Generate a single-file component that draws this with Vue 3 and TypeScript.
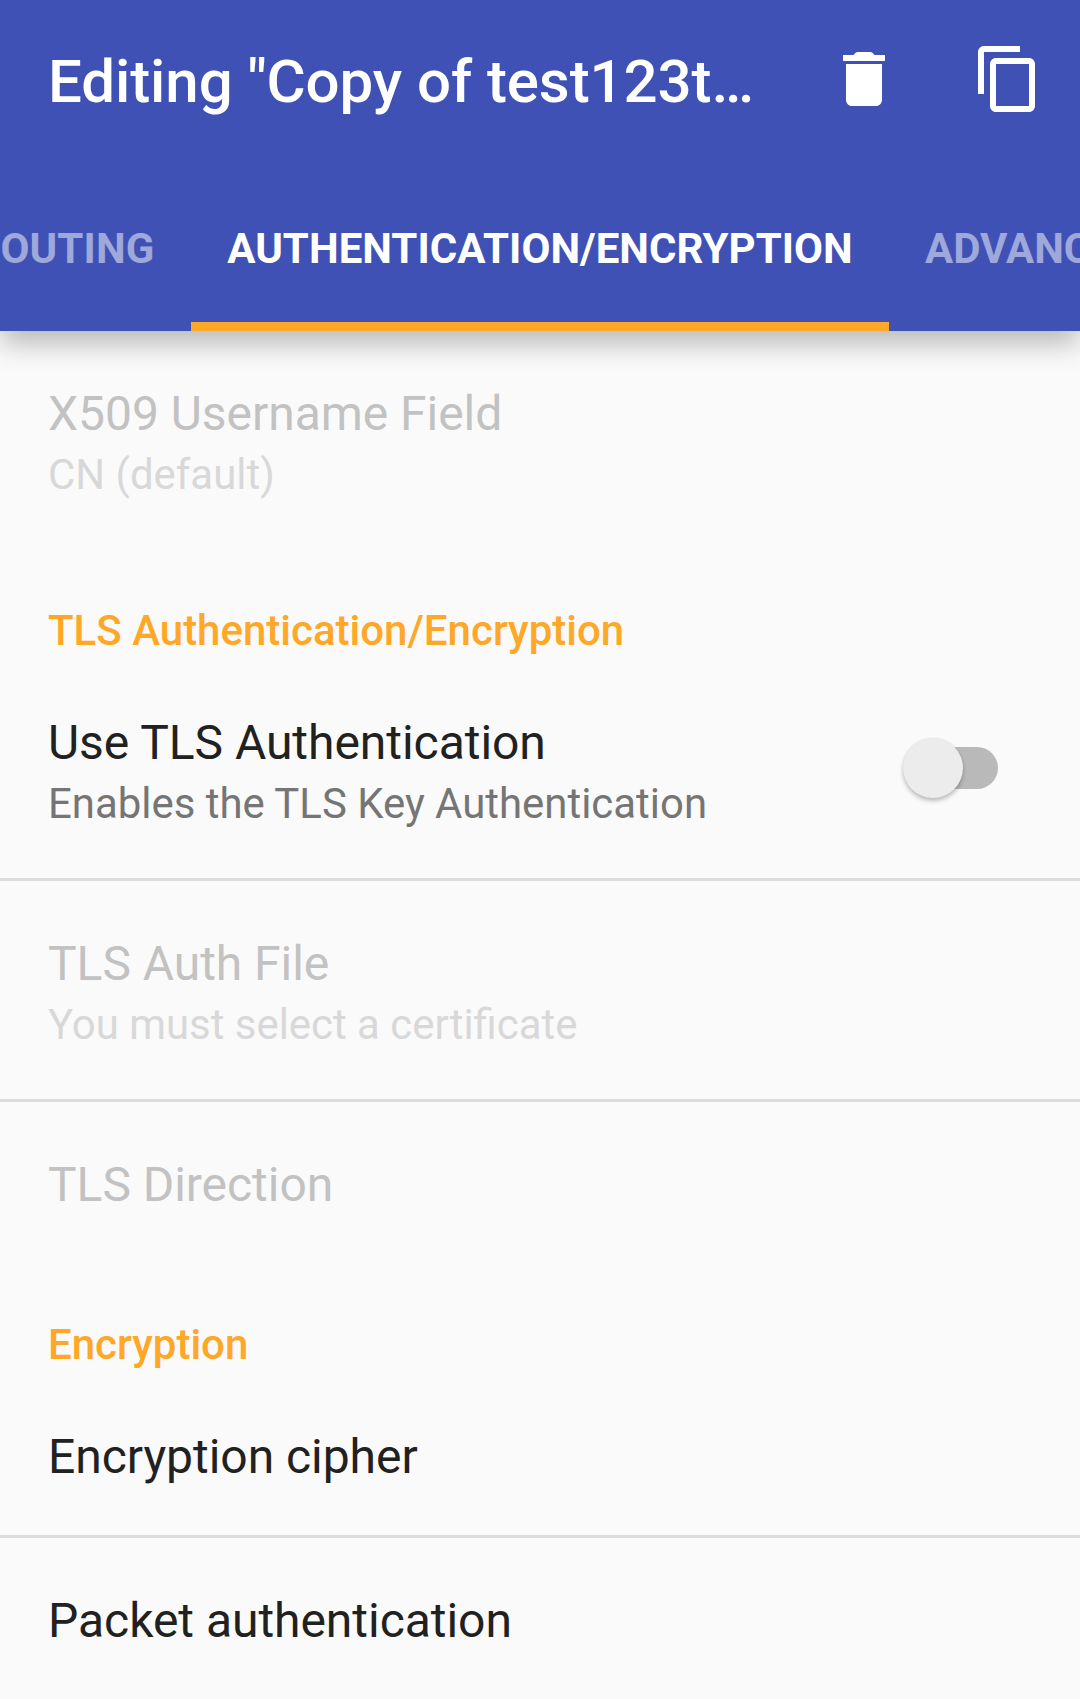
<script setup lang="ts">
interface Preference {
  title: string
  summary?: string
  enabled: boolean
  toggle?: boolean
}

interface Category {
  heading?: string
  items: Preference[]
}

const tabs = [
  { label: 'ROUTING', active: false },
  { label: 'AUTHENTICATION/ENCRYPTION', active: true },
  { label: 'ADVANCED', active: false },
]

const categories: Category[] = [
  {
    items: [{ title: 'X509 Username Field', summary: 'CN (default)', enabled: false }],
  },
  {
    heading: 'TLS Authentication/Encryption',
    items: [
      {
        title: 'Use TLS Authentication',
        summary: 'Enables the TLS Key Authentication',
        enabled: true,
        toggle: true,
      },
      { title: 'TLS Auth File', summary: 'You must select a certificate', enabled: false },
      { title: 'TLS Direction', enabled: false },
    ],
  },
  {
    heading: 'Encryption',
    items: [
      { title: 'Encryption cipher', enabled: true },
      { title: 'Packet authentication', enabled: true },
    ],
  },
]
</script>

<template>
  <div class="screen">
    <header class="app-bar">
      <div class="toolbar">
        <h1 class="title">Editing "Copy of test123t…</h1>
        <button class="action" aria-label="Delete">
          <svg viewBox="0 0 24 24">
            <path d="M6 19c0 1.1.9 2 2 2h8c1.1 0 2-.9 2-2V7H6v12zM19 4h-3.500l-.710-.710c-.180-.180-.440-.290-.700-.290H9.910c-.260 0-.520.110-.700.290L8.500 4H5v2h14V4z" />
          </svg>
        </button>
        <button class="action" aria-label="Duplicate">
          <svg viewBox="0 0 24 24">
            <path d="M16 1H4c-1.100 0-2 .9-2 2v14h2V3h12V1zm3 4H8c-1.100 0-2 .9-2 2v14c0 1.100.9 2 2 2h11c1.100 0 2-.9 2-2V7c0-1.100-.9-2-2-2zm0 16H8V7h11v14z" />
          </svg>
        </button>
      </div>
      <nav class="tabs">
        <div v-for="tab in tabs" :key="tab.label" class="tab" :class="{ active: tab.active }">
          {{ tab.label }}
        </div>
      </nav>
    </header>

    <main class="list">
      <section v-for="(category, i) in categories" :key="i">
        <h2 v-if="category.heading" class="heading">{{ category.heading }}</h2>
        <div
          v-for="item in category.items"
          :key="item.title"
          class="row"
          :class="{ disabled: !item.enabled }"
        >
          <div class="texts">
            <div class="row-title">{{ item.title }}</div>
            <div v-if="item.summary" class="summary">{{ item.summary }}</div>
          </div>
          <div v-if="item.toggle" class="switch"><span class="thumb"></span></div>
        </div>
      </section>
    </main>
  </div>
</template>

<style>
body {
  margin: 0;
  background: #fafafa;
}
</style>

<style scoped>
.screen {
  width: 1080px;
  height: 1699px;
  overflow: hidden;
  background: #fafafa;
  font-family: Roboto, sans-serif;
}

.app-bar {
  position: relative;
  height: 331px;
  background: #3f51b5;
  box-shadow: 0 14px 26px -1px rgba(0, 0, 0, 0.26);
}

.toolbar {
  display: flex;
  align-items: center;
  box-sizing: border-box;
  height: 163px;
  padding: 0 36px 5px 48px;
}

.title {
  flex: 1;
  margin: 0;
  padding-top: 6px;
  font-size: 60px;
  font-weight: 500;
  line-height: 70px;
  letter-spacing: -0.08px;
  white-space: nowrap;
  color: #fff;
}

.action {
  width: 72px;
  height: 72px;
  padding: 0;
  border: 0;
  background: none;
}

.action + .action {
  margin-left: 72px;
}

.action svg {
  display: block;
  width: 72px;
  height: 72px;
  fill: #fff;
}

.tabs {
  display: flex;
  height: 168px;
  overflow: hidden;
}

.tab {
  display: flex;
  flex: none;
  justify-content: center;
  box-sizing: border-box;
  height: 168px;
  padding: 0 36px;
  font-size: 42px;
  font-weight: 700;
  line-height: 172px;
  white-space: nowrap;
  color: rgba(255, 255, 255, 0.5);
}

/* The strip is scrolled: the first tab runs off the left edge. */
.tab:first-child {
  justify-content: flex-end;
  width: 191px;
  padding-right: 36.5px;
  letter-spacing: 0.15px;
}

.tab.active {
  width: 698px;
  letter-spacing: 0.04px;
  color: #fff;
  border-bottom: 9px solid #ffa726;
}

.heading {
  box-sizing: border-box;
  height: 111px;
  margin: 0;
  padding: 57px 48px 0;
  font-size: 42px;
  font-weight: 500;
  line-height: 50px;
  color: #ffa726;
}

.row {
  display: flex;
  align-items: center;
  justify-content: space-between;
  padding: 54px 82px 53px 48px;
  color: #212121;
}

.row + .row {
  border-top: 3px solid #dcdcdc;
}

.row-title {
  height: 54px;
  font-size: 48px;
  line-height: 57px;
  letter-spacing: -0.04px;
}

.summary {
  box-sizing: border-box;
  height: 57px;
  padding-top: 10px;
  font-size: 41.92px;
  line-height: 51px;
  color: #757575;
}

.disabled .row-title {
  color: #c2c2c2;
}

.disabled .summary {
  color: #d8d8d8;
}

.switch {
  display: flex;
  align-items: center;
  width: 90px;
  height: 42px;
  margin-bottom: 4px;
  border-radius: 21px;
  background: #b9b9b9;
}

.thumb {
  flex: none;
  width: 60px;
  height: 60px;
  margin-left: -5px;
  border-radius: 50%;
  background: #ececec;
  box-shadow: 0 3px 4px rgba(0, 0, 0, 0.24), 0 0 2px rgba(0, 0, 0, 0.08);
}
</style>
